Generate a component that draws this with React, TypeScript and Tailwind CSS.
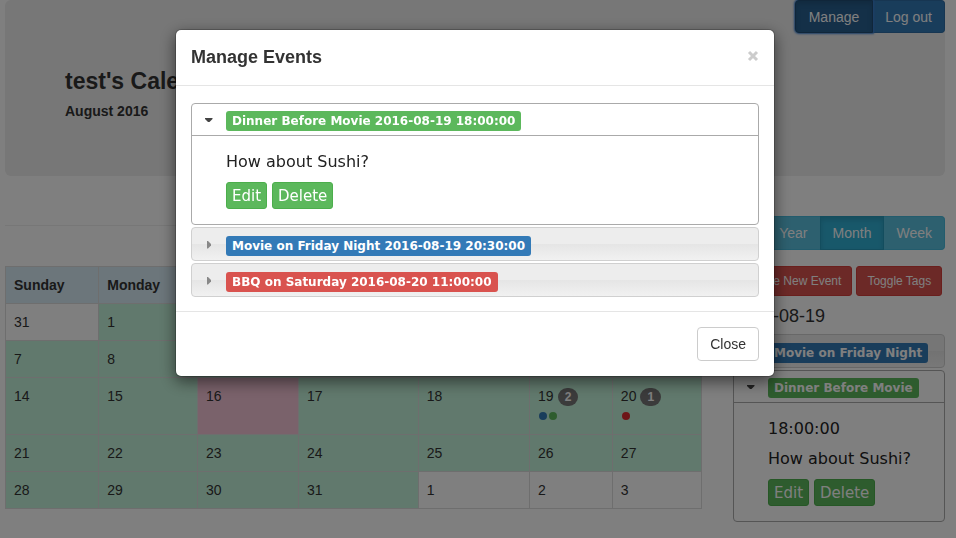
import type { ReactNode } from "react";

type Tone = "green" | "blue" | "red";

const toneClass: Record<Tone, string> = {
  green: "bg-[#5cb85c]",
  blue: "bg-[#337ab7]",
  red: "bg-[#d9534f]",
};

const dotClass: Record<Tone, string> = {
  green: "bg-[#5cb85c]",
  blue: "bg-[#337ab7]",
  red: "bg-[#dc2b30]",
};

function Tag({ tone, children }: { tone: Tone; children: ReactNode }) {
  return (
    <span
      className={`h-5 whitespace-nowrap rounded-[3px] px-1.5 text-[12px] font-bold leading-5 text-white ${toneClass[tone]}`}
    >
      {children}
    </span>
  );
}

function Arrow({ open }: { open: boolean }) {
  return (
    <svg viewBox="0 0 8 8" className="mx-[13px] mt-[5px] size-2 shrink-0" aria-hidden="true">
      {open ? (
        <path d="M0 2h7.5v1L4.5 6h-1.5L0 3z" fill="#444" />
      ) : (
        <path d="M2 0h1l3 3v1.5L3 7.5H2z" fill="#888" />
      )}
    </svg>
  );
}

type PanelProps = { tone: Tone; title: string; lines?: string[] };

function Panel({ tone, title, lines }: PanelProps) {
  const open = lines !== undefined;
  return (
    <section
      className={`rounded-[4px] border font-['DejaVu_Sans',Verdana,sans-serif] text-[#222] ${
        open
          ? "border-[#aaa] bg-white"
          : "border-[#d0d0d0] bg-[linear-gradient(to_bottom,#ededed_0%,#ededed_50%,#e5e5e5_50%,#f1f1f1_100%)]"
      }`}
    >
      <button
        type="button"
        aria-expanded={open}
        className={`flex h-8 w-full items-start text-left ${
          open ? "border-b border-[#aaa] pt-[7px]" : "pt-2"
        }`}
      >
        <Arrow open={open} />
        <Tag tone={tone}>{title}</Tag>
      </button>
      {open && (
        <div className="space-y-2.5 pt-4 pb-[15px] pl-[34px] text-[16px] leading-5">
          {lines.map((line) => (
            <p key={line}>{line}</p>
          ))}
          <div className="flex gap-[5px]">
            <SmallButton>Edit</SmallButton>
            <SmallButton>Delete</SmallButton>
          </div>
        </div>
      )}
    </section>
  );
}

function SmallButton({ children }: { children: ReactNode }) {
  return (
    <button
      type="button"
      className="h-[27px] rounded-[3px] border border-[#4cae4c] bg-[#5cb85c] px-[5px] text-[15px] text-white"
    >
      {children}
    </button>
  );
}

type Day = { n: number; state?: "out" | "today"; events?: Tone[] };

const d = (n: number): Day => ({ n });
const out = (n: number): Day => ({ n, state: "out" });

const weeks: Day[][] = [
  [out(31), d(1), d(2), d(3), d(4), d(5), d(6)],
  [d(7), d(8), d(9), d(10), d(11), d(12), d(13)],
  [
    d(14),
    d(15),
    { n: 16, state: "today" },
    d(17),
    d(18),
    { n: 19, events: ["blue", "green"] },
    { n: 20, events: ["red"] },
  ],
  [d(21), d(22), d(23), d(24), d(25), d(26), d(27)],
  [d(28), d(29), d(30), d(31), out(1), out(2), out(3)],
];

const columns = [
  { name: "Sunday", width: "w-[13.4%]" },
  { name: "Monday", width: "w-[14.2%]" },
  { name: "Tuesday", width: "w-[14.5%]" },
  { name: "Wednesday", width: "w-[17.2%]" },
  { name: "Thursday", width: "w-[16%]" },
  { name: "Friday", width: "w-[11.9%]" },
  { name: "Saturday", width: "w-[12.8%]" },
];

function DayCell({ day }: { day: Day }) {
  const bg =
    day.state === "out" ? "bg-white" : day.state === "today" ? "bg-[#f4c4d6]" : "bg-[#c3f3da]";
  return (
    <td className={`border border-[#ddd] p-2 align-top ${bg}`}>
      <div className="flex h-5 items-center gap-1">
        {day.n}
        {day.events && (
          <span className="mt-px h-[18px] rounded-full bg-[#777] px-[7px] text-[12px] font-bold leading-[18px] text-white">
            {day.events.length}
          </span>
        )}
      </div>
      {day.events && (
        <div className="flex h-5 items-center gap-0.5 pl-px">
          {day.events.map((tone) => (
            <span key={tone} className={`size-2 rounded-full ${dotClass[tone]}`} />
          ))}
        </div>
      )}
    </td>
  );
}

function Calendar() {
  return (
    <table className="w-full table-fixed border-collapse">
      <thead>
        <tr>
          {columns.map((c) => (
            <th
              key={c.name}
              scope="col"
              className={`border border-[#ddd] bg-[#d9edf7] p-2 text-left font-bold ${c.width}`}
            >
              {c.name}
            </th>
          ))}
        </tr>
      </thead>
      <tbody>
        {weeks.map((week, i) => (
          <tr key={i}>
            {week.map((day) => (
              <DayCell key={day.n} day={day} />
            ))}
          </tr>
        ))}
      </tbody>
    </table>
  );
}

function EventsDialog() {
  return (
    <div className="fixed inset-0 bg-black/50 pt-[29px] pr-1.5">
      <div
        role="dialog"
        aria-modal="true"
        aria-labelledby="dialog-title"
        className="mx-auto max-w-[600px] rounded-[6px] border border-black/20 bg-white bg-clip-padding shadow-[0_5px_15px_rgba(0,0,0,0.5)]"
      >
        <header className="flex items-start justify-between border-b border-[#e5e5e5] p-[15px]">
          <h4 id="dialog-title" className="text-[18px] font-bold leading-[25px]">
            Manage Events
          </h4>
          <button type="button" aria-label="Close dialog" className="py-[5px] text-[#ccc]">
            <svg
              viewBox="0 0 12 12"
              className="size-3"
              fill="none"
              stroke="currentColor"
              strokeWidth="3"
              aria-hidden="true"
            >
              <path d="M2 2l8 8M10 2l-8 8" />
            </svg>
          </button>
        </header>
        <div className="space-y-0.5 px-[15px] pt-[17px] pb-3.5">
          <Panel
            tone="green"
            title="Dinner Before Movie 2016-08-19 18:00:00"
            lines={["How about Sushi?"]}
          />
          <Panel tone="blue" title="Movie on Friday Night 2016-08-19 20:30:00" />
          <Panel tone="red" title="BBQ on Saturday 2016-08-20 11:00:00" />
        </div>
        <footer className="flex justify-end border-t border-[#e5e5e5] p-[15px]">
          <button
            type="button"
            className="h-[34px] rounded-[4px] border border-[#ccc] bg-white px-3"
          >
            Close
          </button>
        </footer>
      </div>
    </div>
  );
}

export default function App() {
  return (
    <div className="min-h-screen bg-white pr-[11px] pl-[5px] font-['Liberation_Sans',Arial,sans-serif] text-[14px] leading-5 text-[#333]">
      <header className="flex items-start justify-between rounded-[6px] bg-[#eee]">
        <div className="pt-[66px] pb-[55px] pl-[60px]">
          <h1 className="text-[23px] font-bold leading-[30px]">test's Calendar</h1>
          <p className="mt-[5px] font-bold">August 2016</p>
        </div>
        <nav className="flex text-white">
          <button
            type="button"
            className="relative h-[33px] rounded-l-[4px] border border-[#204d74] bg-[#286090] px-[13px] shadow-[inset_0_3px_5px_rgba(0,0,0,0.125),0_0_2px_1px_#3b7fd0]"
          >
            Manage
          </button>
          <button
            type="button"
            className="h-[33px] rounded-r-[4px] border border-l-0 border-[#2e6da4] bg-[#337ab7] px-3"
          >
            Log out
          </button>
        </nav>
      </header>

      <div className="mt-10 grid grid-cols-[1fr_212px] gap-x-[31px] gap-y-4">
        <hr className="mt-[9px] border-[#eee]" />
        <div className="flex h-[34px] justify-end text-white">
          <button
            type="button"
            className="rounded-l-[4px] border border-r-0 border-[#46b8da] bg-[#5bc0de] px-3"
          >
            Year
          </button>
          <button
            type="button"
            aria-pressed="true"
            className="border border-[#269abc] bg-[#31b0d5] px-3 shadow-[inset_0_3px_5px_rgba(0,0,0,0.125)]"
          >
            Month
          </button>
          <button
            type="button"
            className="rounded-r-[4px] border border-l-0 border-[#46b8da] bg-[#5bc0de] px-3"
          >
            Week
          </button>
        </div>

        <main>
          <Calendar />
        </main>
        <aside>
          <div className="flex gap-1 text-[12px] text-white">
            <button
              type="button"
              className="h-[30px] whitespace-nowrap rounded-[3px] border border-[#d43f3a] bg-[#d9534f] px-2.5"
            >
              Create New Event
            </button>
            <button
              type="button"
              className="h-[30px] whitespace-nowrap rounded-[3px] border border-[#d43f3a] bg-[#d9534f] px-2.5"
            >
              Toggle Tags
            </button>
          </div>
          <h4 className="mt-2.5 mb-2 text-[18px] font-medium leading-5">2016-08-19</h4>
          <div className="space-y-0.5">
            <Panel tone="blue" title="Movie on Friday Night" />
            <Panel
              tone="green"
              title="Dinner Before Movie"
              lines={["18:00:00", "How about Sushi?"]}
            />
          </div>
        </aside>
      </div>

      <EventsDialog />
    </div>
  );
}
